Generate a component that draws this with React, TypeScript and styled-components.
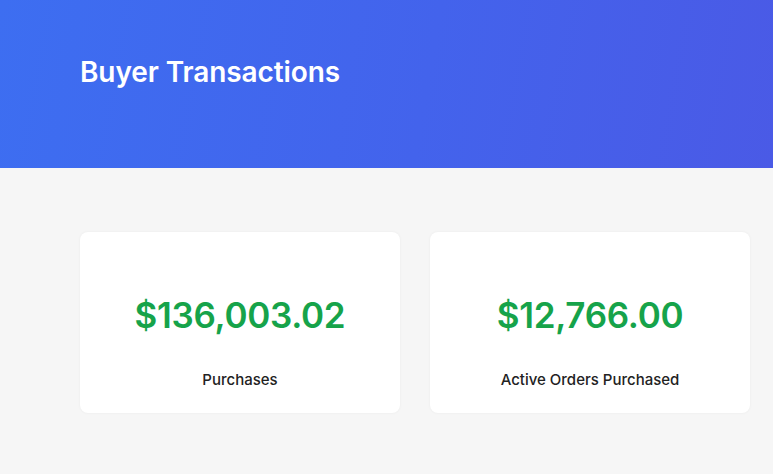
import React from "react";
import styled, { createGlobalStyle } from "styled-components";

const Global = createGlobalStyle`
  html, body { margin: 0; padding: 0; background: #f6f6f6; }
  body { font-family: "Inter", "Open Sans", sans-serif; }
`;

const Page = styled.div`
  width: 773px;
  min-height: 474px;
  background: #f6f6f6;
`;

const Header = styled.header`
  height: 168px;
  box-sizing: border-box;
  padding: 0 0 24px 80px;
  display: flex;
  align-items: center;
  background: linear-gradient(100deg, #3d6ef1 0%, #4363ec 55%, #4a5ae6 100%);
`;

const Title = styled.h1`
  margin: 0;
  color: #ffffff;
  font-family: "Inter", sans-serif;
  font-size: 28px;
  font-weight: 600;
  letter-spacing: -0.1px;
`;

const Content = styled.main`
  padding: 64px 0 0 80px;
  display: grid;
  grid-template-columns: 320px 320px;
  gap: 30px;
`;

const Card = styled.div`
  height: 181px;
  box-sizing: border-box;
  background: #ffffff;
  border-radius: 8px;
  box-shadow: 0 0 3px rgba(0, 0, 0, 0.05);
  display: flex;
  flex-direction: column;
  align-items: center;
  padding-top: 62px;
`;

const Amount = styled.div`
  color: #16a34a;
  font-family: "Inter", sans-serif;
  font-size: 35px;
  font-weight: 600;
  line-height: 42px;
  letter-spacing: -0.3px;
`;

const Label = styled.div`
  margin-top: 35px;
  color: #222222;
  font-family: "Inter", sans-serif;
  font-size: 15px;
  font-weight: 500;
  line-height: 18px;
`;

const stats = [
  { amount: "$136,003.02", label: "Purchases" },
  { amount: "$12,766.00", label: "Active Orders Purchased" },
];

export default function App() {
  return (
    <Page>
      <Global />
      <Header>
        <Title>Buyer Transactions</Title>
      </Header>
      <Content>
        {stats.map((s) => (
          <Card key={s.label}>
            <Amount>{s.amount}</Amount>
            <Label>{s.label}</Label>
          </Card>
        ))}
      </Content>
    </Page>
  );
}
